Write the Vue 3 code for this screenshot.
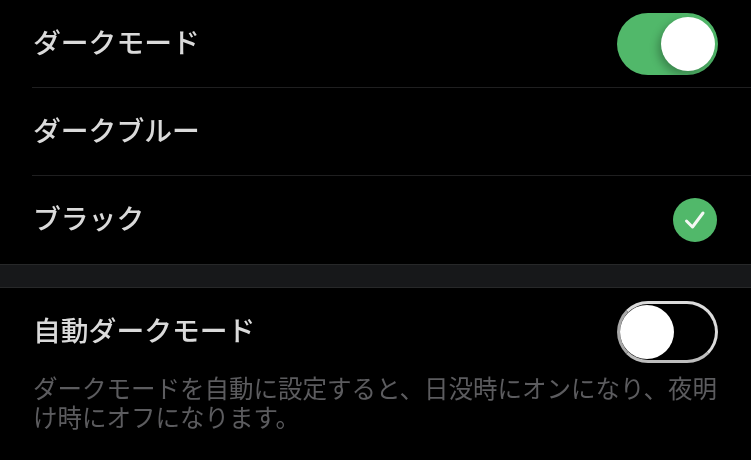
<script setup>
import { ref } from 'vue'

const themes = ref([
  { name: 'ダークブルー', checked: false },
  { name: 'ブラック', checked: true },
])
</script>

<template>
  <div class="page">
    <section class="group">
      <div class="row">
        <span class="label">ダークモード</span>
        <div class="toggle toggle-on"><div class="knob"></div></div>
      </div>
      <div v-for="theme in themes" :key="theme.name" class="row">
        <span class="label">{{ theme.name }}</span>
        <div v-if="theme.checked" class="check">
          <svg width="44" height="44" viewBox="0 0 44 44">
            <circle cx="22" cy="22" r="22" fill="#51b86a" />
            <path d="M13.5 23 L19.5 29 L30 15" fill="none" stroke="#f4f7f4" stroke-width="3" stroke-linecap="round" stroke-linejoin="round" />
          </svg>
        </div>
      </div>
    </section>
    <div class="spacer"></div>
    <section class="group auto">
      <div class="row row-auto">
        <span class="label">自動ダークモード</span>
        <div class="toggle toggle-off"><div class="knob"></div></div>
      </div>
      <p class="desc">ダークモードを自動に設定すると、日没時にオンになり、夜明け時にオフになります。</p>
    </section>
  </div>
</template>

<style scoped>
.page {
  width: 751px;
  height: 460px;
  overflow: hidden;
  background: #000;
  font-family: "Noto Sans CJK JP", "Liberation Sans", sans-serif;
  filter: blur(0.4px);
}
.group {
  padding-left: 32px;
}
.row {
  display: flex;
  align-items: center;
  justify-content: space-between;
  height: 88px;
  padding-left: 1px;
  padding-right: 33px;
  border-bottom: 1px solid #1f1f20;
  box-sizing: border-box;
}
.group .row:last-child,
.group .row-auto {
  border-bottom: none;
}
.label {
  font-size: 27.8px;
  font-weight: 500;
  color: #dadada;
  position: relative;
  top: -3px;
}
.toggle {
  position: relative;
  width: 101px;
  height: 62px;
  border-radius: 31px;
  box-sizing: border-box;
}
.toggle-on {
  background: #51b86a;
}
.toggle-off {
  border: 3px solid #dcdcdc;
  border-left-color: #a8a8a8;
  border-bottom-color: #bdbdbd;
}
.knob {
  position: absolute;
  width: 54px;
  height: 54px;
  border-radius: 50%;
  background: #fff;
}
.toggle-on .knob {
  top: 4px;
  right: 3px;
  box-shadow: -3px 4px 9px rgba(0, 0, 0, 0.28);
}
.toggle-off .knob {
  top: 1px;
  left: 0;
}
.check {
  display: flex;
  margin-right: 1px;
}
.spacer {
  height: 22px;
  background: #17181a;
  border-top: 1px solid #272829;
  border-bottom: 1px solid #272829;
}
.auto {
  padding-right: 32px;
}
.row-auto {
  padding-right: 1px;
}
.desc {
  margin: -3px 0 0;
  padding-left: 1px;
  font-size: 24.5px;
  line-height: 29px;
  color: #5c5c5f;
}
</style>
